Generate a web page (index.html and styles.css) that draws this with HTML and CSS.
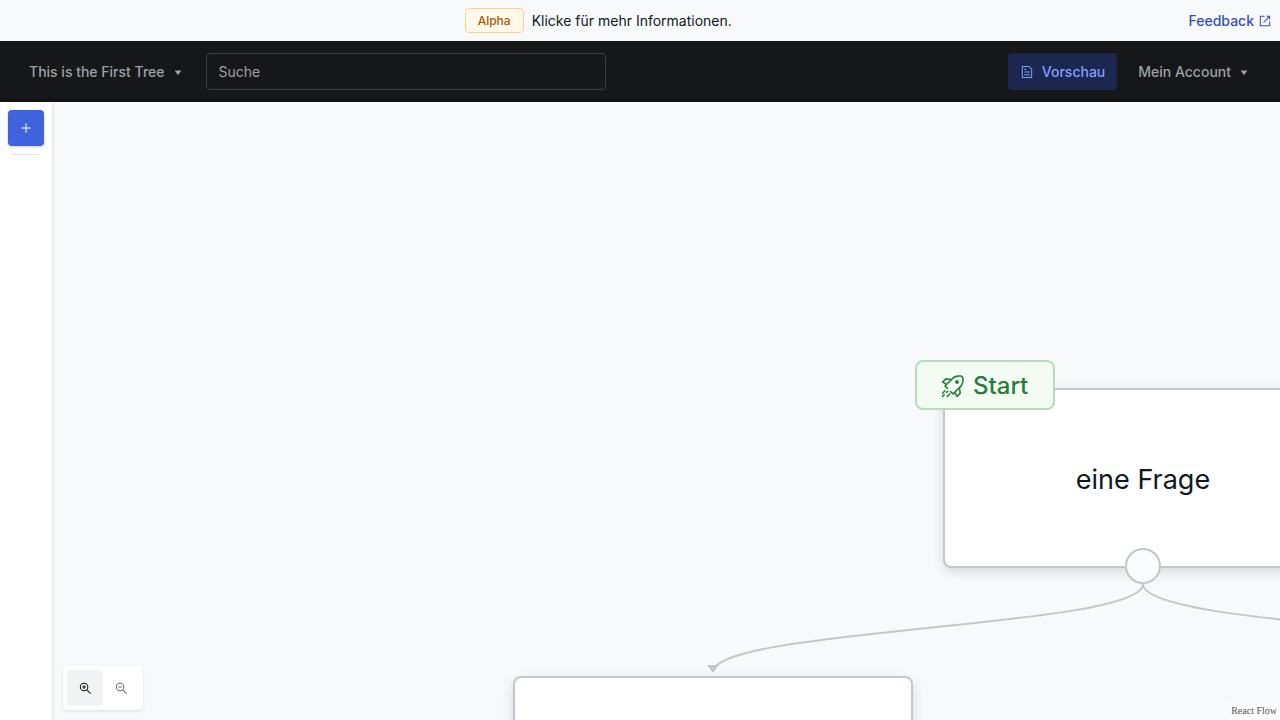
FILE: index.html
```html
<!DOCTYPE html>
<html lang="de">
<head>
<meta charset="utf-8">
<meta name="viewport" content="width=device-width, initial-scale=1">
<title>This is the First Tree</title>
<link rel="stylesheet" href="styles.css">
</head>
<body>
<div class="app">
  <div class="notice">
    <p class="notice-text"><span class="badge">Alpha</span><span>Klicke für mehr Informationen.</span></p>
    <a class="feedback" href="#feedback">Feedback
      <svg class="icon" viewBox="0 0 15 15" aria-hidden="true"><path d="M7 2.500H2.500V12.500H12.500V8M9 2.500h3.500V6M6 9l6.500-6.500"/></svg>
    </a>
  </div>
  <header class="header">
    <button class="menu-button" type="button">This is the First Tree
      <svg class="caret" viewBox="0 0 15 15" aria-hidden="true"><path d="M4 6h7L7.500 11z"/></svg>
    </button>
    <input class="search" type="search" placeholder="Suche" aria-label="Suche">
    <div class="header-actions">
      <button class="preview" type="button">
        <svg class="icon" viewBox="0 0 15 15" aria-hidden="true"><path d="M2.500 1.500h7l3 3v9h-10zM4.500 4.500H7M4.500 7.500h6M4.500 10.500h6"/></svg>
        Vorschau</button>
      <button class="menu-button" type="button">Mein Account
        <svg class="caret" viewBox="0 0 15 15" aria-hidden="true"><path d="M4 6h7L7.500 11z"/></svg>
      </button>
    </div>
  </header>
  <div class="workspace">
    <aside class="sidebar">
      <button class="add" type="button" aria-label="Hinzufügen">
        <svg class="icon" viewBox="0 0 15 15" aria-hidden="true"><path d="M7.500 2.500v10M2.500 7.500h10"/></svg>
      </button>
      <hr class="divider">
    </aside>
    <main class="canvas">
      <svg class="edges" aria-hidden="true">
        <path class="edge" d="M1090 482C1090 526 660 526 660 570M1090 482C1090 526 1520 526 1520 570"/>
        <path class="arrow" d="M654 563h12l-6 8z"/>
      </svg>
      <section class="node node-question">
        <div class="start">
          <svg class="rocket" viewBox="0 0 15 15" aria-hidden="true">
            <path fill-rule="evenodd" d="M6.854 3.854L7.654 3.054C8.298 2.409 9.429 1.962 10.552 1.801C11.106 1.722 11.629 1.717 12.056 1.781C12.499 1.847 12.770 1.977 12.897 2.104C13.023 2.230 13.153 2.501 13.219 2.944C13.283 3.371 13.278 3.894 13.199 4.448C13.038 5.571 12.591 6.702 11.946 7.346L7.500 11.793L6.354 10.646C6.158 10.451 5.842 10.451 5.646 10.646C5.451 10.842 5.451 11.158 5.646 11.354L7.146 12.854C7.342 13.049 7.658 13.049 7.854 12.854L8.401 12.306L9.571 14.257C9.650 14.389 9.786 14.477 9.939 14.496C10.092 14.515 10.245 14.462 10.354 14.354L12.354 12.354C12.465 12.242 12.517 12.085 12.495 11.929L12.030 8.677L12.654 8.054C13.509 7.198 14.012 5.829 14.189 4.589C14.278 3.962 14.289 3.338 14.208 2.795C14.129 2.267 13.952 1.745 13.604 1.396C13.255 1.048 12.733 .871 12.205 .792C11.662 .711 11.038 .722 10.411 .811C9.171 .988 7.802 1.491 6.946 2.346L6.323 2.970L3.071 2.505C2.915 2.483 2.758 2.535 2.646 2.646L.646 4.646C.538 4.755 .485 4.908 .504 5.061C.523 5.214 .611 5.350 .743 5.429L2.694 6.599L2.146 7.146C2.053 7.240 2 7.367 2 7.500C2 7.633 2.053 7.760 2.146 7.854L3.646 9.354C3.842 9.549 4.158 9.549 4.354 9.354C4.549 9.158 4.549 8.842 4.354 8.646L3.207 7.500L3.854 6.854zM10.099 13.194L9.130 11.578L11.146 9.561L11.470 11.823zM3.423 5.870L5.439 3.854L3.177 3.530L1.806 4.901z"/>
            <circle cx="10" cy="5" r="1.200"/>
            <path class="flames" d="M2.500 10.500L1 12M4.300 10.800L3.600 11.500M2 13L1 14M5.500 12.500L4 14"/>
          </svg>
          Start
        </div>
        <h1 class="question">eine Frage</h1>
        <span class="handle"></span>
      </section>
      <section class="node node-answer"></section>
      <div class="zoom-controls">
        <button class="zoom-button zoom-active" type="button" aria-label="Vergrößern">
          <svg class="icon" viewBox="0 0 15 15" aria-hidden="true"><circle cx="6.500" cy="6.500" r="4"/><path d="M9.500 9.500l4 4M4.500 6.500h4M6.500 4.500v4"/></svg>
        </button>
        <button class="zoom-button" type="button" aria-label="Verkleinern">
          <svg class="icon" viewBox="0 0 15 15" aria-hidden="true"><circle cx="6.500" cy="6.500" r="4"/><path d="M9.500 9.500l4 4M4.500 6.500h4"/></svg>
        </button>
      </div>
      <a class="attribution" href="#react-flow">React Flow</a>
    </main>
  </div>
</div>
</body>
</html>
```
FILE: styles.css
```css
*, *::before, *::after { box-sizing: border-box; }

body {
  margin: 0;
  font-family: Inter, "Liberation Sans", sans-serif;
  font-size: 14px;
  line-height: 21px;
  color: #11181c;
}

button, input { font: inherit; }
button { border: 0; background: none; cursor: pointer; }
p, h1 { margin: 0; }

.app {
  display: flex;
  flex-direction: column;
  height: 100vh;
  overflow: hidden;
}

.icon {
  width: 14px;
  height: 14px;
  flex: none;
  fill: none;
  stroke: currentColor;
  stroke-width: 1.1;
}

.caret { width: 14px; height: 14px; fill: currentColor; }

.notice {
  display: flex;
  align-items: center;
  padding: 8px;
  background: #f8f9fb;
}

.notice-text {
  flex: 1;
  display: flex;
  align-items: center;
  justify-content: center;
  gap: 8px;
}

.badge {
  padding: 2px 12px;
  border: 1px solid #ffd386;
  border-radius: 4px;
  background: #fff8eb;
  color: #ad5700;
  font-size: 12px;
  line-height: 19px;
  font-weight: 500;
}

.feedback {
  display: flex;
  align-items: center;
  gap: 4px;
  color: #3451b2;
  font-weight: 500;
  text-decoration: none;
}

.header {
  display: flex;
  align-items: center;
  padding: 12px 16px 8px;
  border-bottom: 4px solid #151215;
  background: #161719;
}

.menu-button {
  display: flex;
  align-items: center;
  gap: 6px;
  padding: 8px 13px;
  color: #9ba1a6;
  font-weight: 500;
}

.search {
  width: 400px;
  margin-left: 8px;
  padding: 7px 12px;
  border: 1px solid #3a3c3f;
  border-radius: 4px;
  background: transparent;
  color: #ededed;
}
.search::placeholder { color: #a0a0a0; opacity: 1; }

.header-actions { display: flex; gap: 8px; margin-left: auto; }

.preview {
  display: flex;
  align-items: center;
  gap: 8px;
  padding: 8px 12px;
  border-radius: 4px;
  background: #1c274f;
  color: #849dff;
  font-weight: 500;
}

.workspace { display: flex; flex: 1; min-height: 0; }

.sidebar {
  display: flex;
  flex-direction: column;
  align-items: center;
  gap: 8px;
  padding: 8px;
  border-right: 1px solid #e6e8eb;
  background: #fff;
  box-shadow: 0 1px 3px rgba(0, 0, 0, .1);
  z-index: 1;
}

.add {
  display: grid;
  place-items: center;
  width: 36px;
  height: 36px;
  border-radius: 4px;
  background: #3e63dd;
  color: #fff;
  box-shadow: 0 1px 3px rgba(0, 0, 0, .2);
}

.divider { width: 28px; margin: 0; border: 0; border-top: 1px solid #e2e4e7; }

.canvas {
  position: relative;
  flex: 1;
  overflow: hidden;
  background: #f8f9fb;
}

.edges {
  position: absolute;
  inset: 0;
  width: 100%;
  height: 100%;
  z-index: 1;
}
.edge { fill: none; stroke: #c1c8cd; stroke-width: 2; }
.arrow { fill: #c1c8cd; }

.node {
  position: absolute;
  display: grid;
  place-items: center;
  width: 400px;
  height: 180px;
  border: 2px solid #c1c8cd;
  border-radius: 8px;
  background: #fff;
  box-shadow: 0 4px 12px rgba(0, 0, 0, .13);
}
.node-question { left: 890px; top: 286px; }
.node-answer { left: 460px; top: 574px; }

.question { padding-top: 4px; font-size: 27px; line-height: 36px; font-weight: 400; }

.start {
  position: absolute;
  left: -30px;
  top: -30px;
  display: flex;
  align-items: center;
  gap: 8px;
  padding: 6px 25px 4px 24px;
  border: 2px solid #b4dfbc;
  border-radius: 8px;
  background: #f2fcf3;
  color: #297c3b;
  font-size: 24px;
  line-height: 36px;
  font-weight: 500;
}

.rocket { width: 24px; height: 24px; fill: currentColor; }
.rocket .flames { fill: none; stroke: currentColor; stroke-linecap: round; }

.handle {
  position: absolute;
  left: 180px;
  bottom: -18px;
  width: 36px;
  height: 36px;
  border: 2px solid #c1c8cd;
  border-radius: 50%;
  background: #fbfcfd;
}

.zoom-controls {
  position: absolute;
  left: 10px;
  bottom: 10px;
  display: flex;
  padding: 4px;
  border-radius: 4px;
  background: #fff;
  box-shadow: 0 1px 3px rgba(0, 0, 0, .12);
}
.zoom-button {
  display: grid;
  place-items: center;
  width: 36px;
  height: 36px;
  border-radius: 4px;
  color: #687076;
}
.zoom-active { background: #f1f3f5; color: #11181c; }

.attribution {
  position: absolute;
  right: 0;
  bottom: 0;
  padding: 2px 3px;
  background: #fbfcfd;
  color: #555;
  font-family: "Liberation Serif", serif;
  font-size: 10px;
  line-height: 14px;
  text-decoration: none;
}
```
